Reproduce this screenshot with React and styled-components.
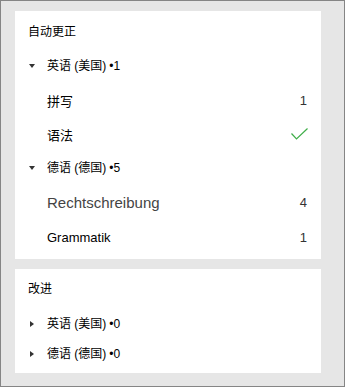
import React from 'react';
import styled, { createGlobalStyle } from 'styled-components';

const GlobalStyle = createGlobalStyle`
  html, body {
    margin: 0;
    padding: 0;
  }
  body {
    font-family: "Liberation Sans", "Noto Sans CJK SC", sans-serif;
    -webkit-font-smoothing: antialiased;
  }
`;

const Window = styled.div`
  box-sizing: border-box;
  width: 345px;
  height: 387px;
  border: 1px solid #858585;
  background: #e6e6e6;
  padding: 10px 23px 0 14px;
  display: flex;
  flex-direction: column;
  gap: 10px;
`;

const Card = styled.section`
  background: #ffffff;
  padding: ${({ $pad }) => $pad};
  display: flex;
  flex-direction: column;
`;

const CardTitle = styled.div`
  height: 20px;
  line-height: 20px;
  font-size: 12px;
  color: #000;
  margin-bottom: ${({ $gap }) => $gap}px;
`;

const SectionRow = styled.div`
  height: ${({ $h }) => $h}px;
  display: flex;
  align-items: center;
  font-size: 12px;
  color: #000;
`;

const Caret = styled.span`
  width: 19px;
  flex: none;
  display: flex;
  align-items: center;
  padding-left: ${({ $open }) => ($open ? 1 : 2)}px;
  box-sizing: border-box;
  &::before {
    content: '';
    display: block;
    width: 0;
    height: 0;
    ${({ $open }) =>
      $open
        ? `border-left: 3.5px solid transparent;
           border-right: 3.5px solid transparent;
           border-top: 4px solid #333;`
        : `border-top: 3.5px solid transparent;
           border-bottom: 3.5px solid transparent;
           border-left: 4px solid #333;`}
  }
`;

const SectionLabel = styled.span`
  line-height: 20px;
`;

const Count = styled.span`
  margin-left: 3px;
`;

const ItemRow = styled.div`
  height: ${({ $h }) => $h}px;
  display: flex;
  align-items: center;
  justify-content: space-between;
  padding-left: 19px;
`;

const ItemLabel = styled.span`
  font-size: ${({ $size }) => $size}px;
  color: ${({ $color }) => $color};
`;

const ItemValue = styled.span`
  font-size: 13px;
  color: #333;
`;

const Check = () => (
  <svg width="17" height="12" viewBox="0 0 17 12" style={{ marginRight: -1 }}>
    <polyline points="0.5,5.5 5.5,11 16.5,0.5" fill="none" stroke="#3fae49" strokeWidth="1.2" />
  </svg>
);

const Section = ({ open, name, count, h }) => (
  <SectionRow $h={h}>
    <Caret $open={open} />
    <SectionLabel>
      {name}
      <Count>•{count}</Count>
    </SectionLabel>
  </SectionRow>
);

export default function App() {
  return (
    <>
      <GlobalStyle />
      <Window>
        <Card $pad="11px 14px 4px 13px">
          <CardTitle $gap={7}>自动更正</CardTitle>
          <Section open name="英语 (美国)" count="1" h={34} />
          <ItemRow $h={34}>
            <ItemLabel $size={13} $color="#000">拼写</ItemLabel>
            <ItemValue>1</ItemValue>
          </ItemRow>
          <ItemRow $h={34}>
            <ItemLabel $size={13} $color="#000">语法</ItemLabel>
            <Check />
          </ItemRow>
          <Section open name="德语 (德国)" count="5" h={34} />
          <ItemRow $h={34}>
            <ItemLabel $size={15} $color="#444">Rechtschreibung</ItemLabel>
            <ItemValue>4</ItemValue>
          </ItemRow>
          <ItemRow $h={36}>
            <ItemLabel $size={13} $color="#000">Grammatik</ItemLabel>
            <ItemValue>1</ItemValue>
          </ItemRow>
        </Card>
        <Card $pad="10px 14px 4px 13px">
          <CardTitle $gap={10}>改进</CardTitle>
          <Section name="英语 (美国)" count="0" h={30} />
          <Section name="德语 (德国)" count="0" h={30} />
        </Card>
      </Window>
    </>
  );
}
